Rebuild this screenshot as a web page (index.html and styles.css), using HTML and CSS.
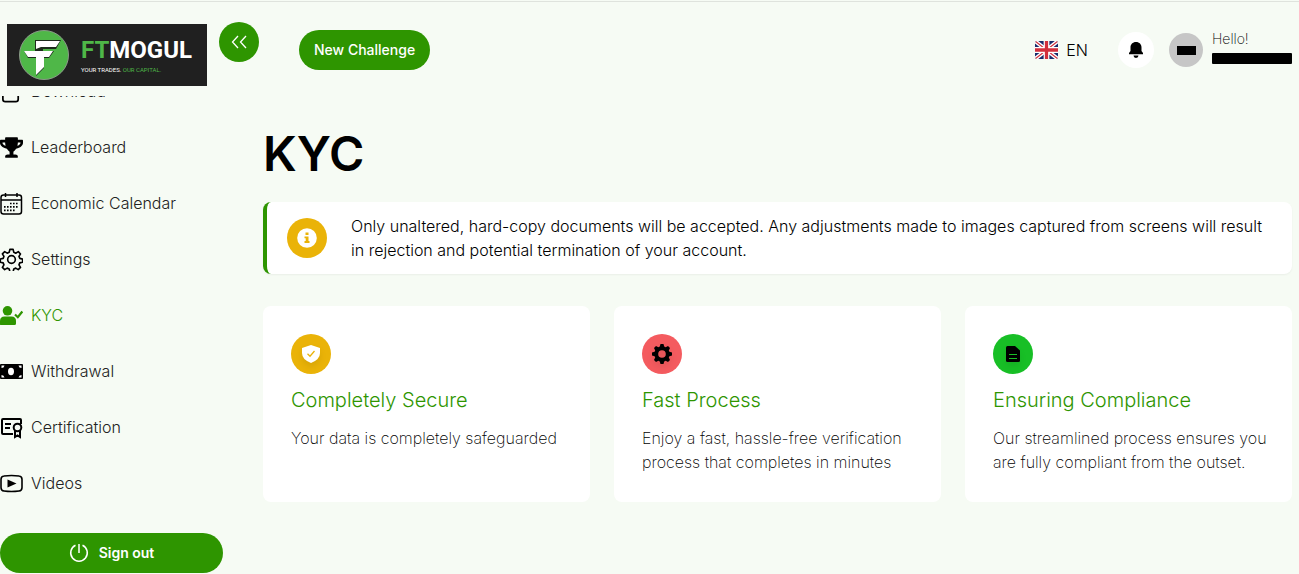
FILE: index.html
```html
<!DOCTYPE html>
<html lang="en">
<head>
    <meta charset="UTF-8">
    <meta name="viewport" content="width=device-width, initial-scale=1.0">
    <title>KYC - FTMogul</title>
    <link rel="stylesheet" href="styles.css">
</head>
<body>
    <header class="header">
        <a href="#" class="logo" aria-label="FTMogul">
            <svg class="logo-mark" viewBox="0 0 50 50">
                <circle cx="25" cy="25" r="24.5" fill="#4fb748" stroke="#8b9a89"/>
                <path d="M16 10h26l-5 9H24v2h11l-5 7h-5v10l-8 8V28H9l-4-7h11z" fill="#1d2b1c"/>
                <path d="M17 11h24l-4 6H22l-5 2zM5 21h29l-4 6h-5v10l-8 8V27H9z" fill="#fff"/>
            </svg>
            <span class="logo-text">
                <span class="logo-name"><span class="logo-green">FT</span>MOGUL</span>
                <span class="logo-tagline">YOUR TRADES. <span class="logo-green">OUR CAPITAL.</span></span>
            </span>
        </a>
        <button class="collapse-button" aria-label="Collapse menu">
            <svg width="16" height="14" viewBox="0 0 16 14" fill="none" stroke="#fff" stroke-width="1.3">
                <path d="M7 1L1.500 7 7 13M15 1L9.500 7 15 13"/>
            </svg>
        </button>
        <div class="topbar">
            <button class="primary-button">New Challenge</button>
            <div class="topbar-right">
                <button class="language">
                    <svg width="23" height="18" viewBox="0 0 24 18" preserveAspectRatio="none">
                        <defs><clipPath id="flag"><rect width="24" height="18" rx="2"/></clipPath></defs>
                        <g clip-path="url(#flag)">
                            <path fill="#1a2c6b" d="M0 0h24v18H0z"/>
                            <path d="M0 0l24 18M24 0L0 18" stroke="#fff" stroke-width="4"/>
                            <path d="M0 0l24 18M24 0L0 18" stroke="#d22f3c" stroke-width="1.2"/>
                            <path d="M12 0v18M0 9h24" stroke="#fff" stroke-width="6"/>
                            <path d="M12 0v18M0 9h24" stroke="#d22f3c" stroke-width="3.400"/>
                        </g>
                    </svg>
                    EN
                </button>
                <button class="bell" aria-label="Notifications">
                    <svg width="14" height="16" viewBox="0 0 14 16">
                        <path d="M7 0C3.600 0 1.500 2.400 1.500 5.500V9L0 11v1.200h14V11L12.500 9V5.500C12.500 2.400 10.400 0 7 0zM4.500 13.500a2.500 2.500 0 0 0 5 0z"/>
                    </svg>
                </button>
                <div class="user">
                    <span class="avatar"><span class="avatar-mask"></span></span>
                    <span class="user-info">
                        <span class="user-greeting">Hello!</span>
                        <span class="user-mask"></span>
                    </span>
                </div>
            </div>
        </div>
    </header>

    <div class="layout">
        <aside class="sidebar">
            <nav class="nav">
                <a href="#" class="nav-item">
                    <svg class="nav-icon" viewBox="0 0 24 24" fill="none" stroke="#000" stroke-width="1.8">
                        <path d="M12 3v11M8 10l4 4 4-4M3 14v6q0 2.500 2.500 2.500h11q2.500 0 2.500-2.500v-6"/>
                    </svg>
                    Download
                </a>
                <a href="#" class="nav-item">
                    <svg class="nav-icon" viewBox="0 0 576 512">
                        <path d="M552 64H448V24c0-13.300-10.700-24-24-24H152c-13.300 0-24 10.700-24 24v40H24C10.700 64 0 74.700 0 88v56c0 35.700 22.500 72.400 61.900 100.700 31.500 22.700 69.800 37.100 110 41.700C203.300 338.500 240 360 240 360v72h-48c-35.300 0-64 20.700-64 56v12c0 6.600 5.400 12 12 12h296c6.600 0 12-5.400 12-12v-12c0-35.300-28.700-56-64-56h-48v-72s36.700-21.500 68.100-73.600c40.300-4.600 78.600-19 110-41.700 39.300-28.300 61.900-65 61.900-100.700V88c0-13.300-10.700-24-24-24zM99.300 192.800C74.900 175.200 64 155.600 64 144v-16h64.200c1 32.600 5.800 61.200 12.800 86.200-15.100-5.200-29.200-12.400-41.700-21.400zM512 144c0 16.100-17.700 36.100-35.300 48.800-12.500 9-26.700 16.200-41.800 21.400 7-25 11.800-53.600 12.800-86.200H512v16z"/>
                    </svg>
                    Leaderboard
                </a>
                <a href="#" class="nav-item">
                    <svg class="nav-icon" viewBox="0 0 23 23" fill="none" stroke="#000">
                        <path d="M5.500 1v4M17 1v4M1 8h20" stroke-width="1.500"/>
                        <rect x="1" y="3" width="20.500" height="19" rx="2.500" stroke-width="1.500"/>
                        <path d="M10 11.500h9M4 14.900h15M4 18.300h12" stroke-width="1.700" stroke-dasharray="1.600 1.400"/>
                    </svg>
                    Economic Calendar
                </a>
                <a href="#" class="nav-item">
                    <svg class="nav-icon" viewBox="0 0 24 24" fill="none" stroke="#000" stroke-width="1.700" stroke-linejoin="round">
                        <path d="M10.300 1.500h3.400l.7 3 2 .9 2.700-1.600 2.300 2.400-1.600 2.600.9 2 2.900.8v3.200l-3 .7-.8 2.100 1.600 2.600-2.400 2.400-2.600-1.600-2 .8-.7 3h-3.400l-.7-3-2.100-.8-2.600 1.600-2.400-2.400 1.600-2.600-.8-2.100-3-.7v-3.300l3-.7.8-2-1.600-2.700 2.400-2.300 2.600 1.600 2.100-.9z"/>
                        <circle cx="12" cy="12" r="4"/>
                    </svg>
                    Settings
                </a>
                <a href="#" class="nav-item active">
                    <svg class="nav-icon" viewBox="0 0 23 20" fill="#2e9500">
                        <circle cx="7.500" cy="5.300" r="4.800"/>
                        <path d="M0 19v-3.500Q0 11 4.500 11h7q4.500 0 4.500 4.500V18q0 1.500-1.500 1.500H1Q0 19.500 0 19z"/>
                        <path d="M15 9l2.800 2.700L22.300 6" fill="none" stroke="#2e9500" stroke-width="2.200"/>
                    </svg>
                    KYC
                </a>
                <a href="#" class="nav-item">
                    <svg class="nav-icon" viewBox="0 0 23 15">
                        <rect width="23" height="15" rx="1"/>
                        <ellipse cx="11" cy="7.500" rx="3" ry="3.700" fill="#fff"/>
                        <path d="M1.500 4V1.500h3Q4 4 1.500 4zM21.500 4V1.500h-3Q19 4 21.500 4zM1.500 11v2.500h3Q4 11 1.500 11zM21.500 11v2.500h-3Q19 11 21.500 11z" fill="#fff"/>
                    </svg>
                    Withdrawal
                </a>
                <a href="#" class="nav-item">
                    <svg class="nav-icon" viewBox="0 0 23 21" fill="none" stroke="#000" stroke-width="2">
                        <path d="M13 17H3q-1 0-1-1V3q0-1 1-1h17q1 0 1 1v4M5 7h6M5 11h5"/>
                        <circle cx="17.500" cy="10.500" r="3.800"/>
                        <path d="M15 14v6l2.500-1.500L20 20v-6"/>
                    </svg>
                    Certification
                </a>
                <a href="#" class="nav-item">
                    <svg class="nav-icon" viewBox="0 0 23 18">
                        <path d="M4 1.500Q11.500.5 19 1.500q3 .3 3 3.500v8q0 3.200-3 3.500-7.500 1-15 0-3-.3-3-3.500V5q0-3.200 3-3.500z" fill="none" stroke="#000" stroke-width="1.600"/>
                        <path d="M7.500 5v8l9-4z"/>
                    </svg>
                    Videos
                </a>
            </nav>
            <button class="primary-button sign-out">
                <svg width="20" height="20" viewBox="0 0 20 20" fill="none" stroke="#fff" stroke-width="1.500">
                    <path d="M6.500 2.300a8.300 8.300 0 1 0 7 0M10 1v9"/>
                </svg>
                Sign out
            </button>
        </aside>

        <main class="main">
            <h1>KYC</h1>
            <section class="notice">
                <span class="badge yellow">
                    <svg width="20" height="20" viewBox="0 0 20 20">
                        <circle cx="10" cy="10" r="9.800" fill="#fff"/>
                        <path d="M8.500 4.500h3V7h-3zM7.500 8.500h4V13h1v2h-5v-2h1.200v-2.700H7.500z" fill="#eab308"/>
                    </svg>
                </span>
                <p>Only unaltered, hard-copy documents will be accepted. Any adjustments made to images captured from screens will result in rejection and potential termination of your account.</p>
            </section>
            <section class="cards">
                <article class="card">
                    <span class="badge yellow">
                        <svg class="badge-icon" width="18" height="18" viewBox="0 0 18 18">
                            <path d="M9 0l9 3v5q0 6.500-9 10Q0 14.500 0 8V3z" fill="#fff"/>
                            <path d="M5.500 8.800L8 11.200 12.500 6" fill="none" stroke="#eab308" stroke-width="1.300"/>
                        </svg>
                    </span>
                    <h2>Completely Secure</h2>
                    <p>Your data is completely safeguarded</p>
                </article>
                <article class="card">
                    <span class="badge red">
                        <svg class="badge-icon" width="20" height="20" viewBox="0 0 20 20">
                            <path fill-rule="evenodd" d="M8.500 0h3l.7 2.600 1.400.6L16 2l2 2-1.200 2.400.6 1.400L20 8.500v3l-2.600.7-.6 1.400L18 16l-2 2-2.400-1.200-1.400.6-.7 2.600h-3l-.7-2.600-1.400-.6L4 18l-2-2 1.200-2.400-.6-1.400L0 11.500v-3l2.600-.7.6-1.400L2 4l2-2 2.400 1.200 1.400-.6zM10 6.200a3.800 3.800 0 1 0 0 7.600 3.800 3.800 0 0 0 0-7.600z"/>
                        </svg>
                    </span>
                    <h2>Fast Process</h2>
                    <p>Enjoy a fast, hassle-free verification process that completes in minutes</p>
                </article>
                <article class="card">
                    <span class="badge green">
                        <svg class="badge-icon" width="14" height="16" viewBox="0 0 14 16">
                            <path d="M1.500 0H9l5 4.500v10q0 1.500-1.500 1.500h-11Q0 16 0 14.500v-13Q0 0 1.500 0z"/>
                            <path d="M3 8.500h8M3 12.500h8" stroke="#18bf26"/>
                        </svg>
                    </span>
                    <h2>Ensuring Compliance</h2>
                    <p>Our streamlined process ensures you are fully compliant from the outset.</p>
                </article>
            </section>
        </main>
    </div>
</body>
</html>
```
FILE: styles.css
```css
:root {
    --page-bg: #f6fbf4;
    --green: #2e9500;
    --yellow: #eab308;
    --red: #f45b5f;
    --bright-green: #18bf26;
}
* { box-sizing: border-box; }
body { margin: 0; padding-top: 1px; height: 100vh; display: flex; flex-direction: column; background: var(--page-bg); color: #000; font-family: Inter, "Liberation Sans", sans-serif; font-size: 16px; line-height: 24px; font-weight: 300; }
button { border: 0; padding: 0; font: inherit; color: inherit; background: none; cursor: pointer; }
a { color: inherit; text-decoration: none; }
h1, h2, p { margin: 0; }
svg { flex: none; display: block; }

.header { display: flex; align-items: flex-start; padding: 20px 7px 10px; border-top: 1px solid #dfe3dd; }
.logo { display: flex; align-items: center; gap: 12px; width: 200px; height: 62px; margin-top: 2px; padding-left: 12px; background: #202020; color: #fff; }
.logo-mark { width: 50px; height: 50px; }
.logo-text { display: flex; flex-direction: column; }
.logo-name { font: bold 24px/30px Roboto, "Liberation Sans", sans-serif; }
.logo-tagline { font: 6px/10px Roboto, "Liberation Sans", sans-serif; white-space: nowrap; }
.logo-green { color: #4fb748; }
.collapse-button { display: flex; align-items: center; justify-content: center; width: 40px; height: 40px; margin-left: 12px; border-radius: 50%; background: var(--green); }
.topbar { flex: 1; display: flex; align-items: center; justify-content: space-between; height: 40px; margin: 8px 0 0 40px; }
.primary-button { height: 40px; padding: 0 15px; border-radius: 20px; background: var(--green); color: #fff; font-size: 14px; font-weight: 500; }
.topbar-right { display: flex; align-items: center; }
.language { display: flex; align-items: center; gap: 8px; }
.bell { display: flex; align-items: center; justify-content: center; width: 36px; height: 36px; margin: 0 15px 0 30px; border-radius: 50%; background: #fff; }
.user { display: flex; align-items: center; gap: 9px; }
.avatar { display: flex; align-items: center; justify-content: center; width: 34px; height: 34px; border-radius: 50%; background: #c6c6c6; }
.avatar-mask { width: 19px; height: 9px; background: #000; }
.user-info { display: flex; flex-direction: column; gap: 4px; width: 80px; margin-bottom: 7px; }
.user-greeting { font-size: 14px; line-height: 20px; font-weight: 200; }
.user-mask { height: 11px; border-radius: 1px; background: #000; }

.layout { flex: 1; min-height: 0; display: flex; gap: 40px; padding-right: 7px; }
.sidebar { width: 223px; flex: none; display: flex; flex-direction: column; gap: 22px; padding-bottom: 1px; }
/* list is scrolled to its end */
.nav { flex: 1; min-height: 0; display: flex; flex-direction: column; justify-content: flex-end; overflow: hidden; }
.nav-item { flex: none; display: flex; align-items: center; gap: 8px; height: 56px; color: #222; }
.nav-item.active { color: var(--green); }
.nav-icon { width: 23px; height: 23px; }
.sign-out { display: flex; align-items: center; justify-content: center; gap: 10px; font-weight: 600; }

.main { flex: 1; min-width: 0; padding-top: 30px; }
h1 { font-size: 48px; line-height: 56px; font-weight: 600; }
.notice { display: flex; align-items: center; gap: 24px; margin-top: 20px; padding: 12px 20px; background: #fff; border-left: 4px solid var(--green); border-radius: 8px; box-shadow: 0 1px 2px rgba(0, 0, 0, 0.05); }
.badge { flex: none; display: flex; align-items: center; justify-content: center; width: 40px; height: 40px; border-radius: 50%; }
.yellow { background: var(--yellow); }
.red { background: var(--red); }
.green { background: var(--bright-green); }
.badge-icon { filter: drop-shadow(0 4px 3px rgba(0, 0, 0, 0.08)); }
.cards { display: grid; grid-template-columns: repeat(3, 1fr); gap: 24px; margin-top: 32px; }
.card { padding: 28px 16px 28px 28px; background: #fff; border-radius: 8px; }
.card h2 { margin: 12px 0; font-size: 20px; line-height: 28px; font-weight: 300; color: var(--green); }
.card p { font-weight: 200; }
```
